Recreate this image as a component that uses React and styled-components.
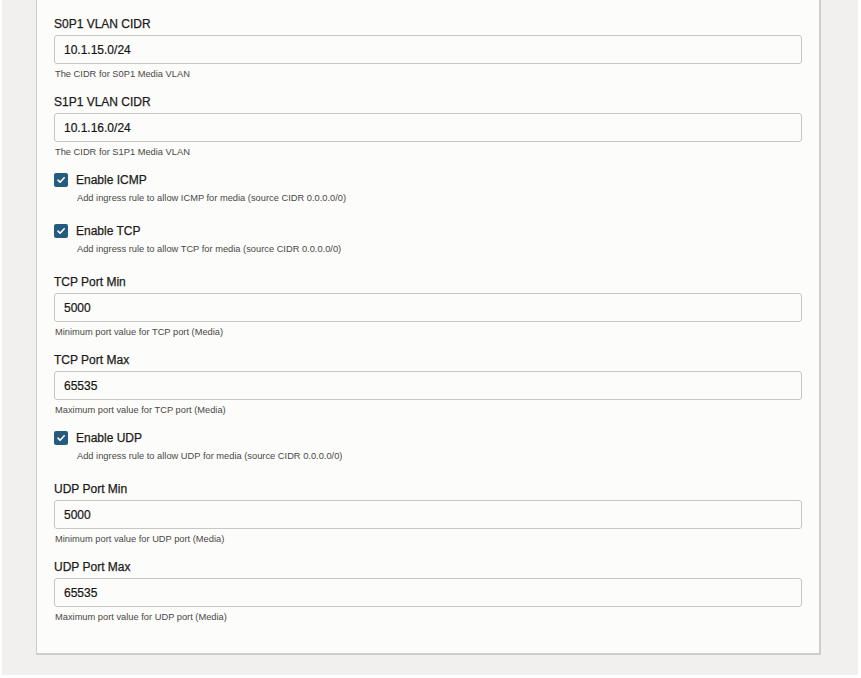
import React from "react";
import styled, { createGlobalStyle } from "styled-components";

const GlobalStyle = createGlobalStyle`
  html, body {
    margin: 0;
    padding: 0;
    background: #ffffff;
  }
  body {
    font-family: "Liberation Sans", Arial, sans-serif;
  }
`;

const Page = styled.div`
  margin: 0 3px 0 2px;
  padding: 0 37px 20px 34px;
  background: #f1f0ee;
`;

const Panel = styled.div`
  background: #fcfcfb;
  border: 1px solid #cfcdca;
  border-top: none;
  border-width: 0 2px 2px 1px;
  padding: 16px 17px 16px 17px;
`;

const Field = styled.div`
  margin-bottom: 14px;
`;

const Label = styled.div`
  font-size: 12px;
  line-height: 16px;
  color: #1c1b19;
  margin-bottom: 3px;
  -webkit-text-stroke: 0.25px #1c1b19;
`;

const Input = styled.div`
  height: 29px;
  box-sizing: border-box;
  border: 1px solid #c9c7c3;
  border-radius: 3px;
  padding: 0 9px;
  display: flex;
  align-items: center;
  font-size: 12px;
  color: #161513;
  background: #fcfcfb;
  -webkit-text-stroke: 0.2px #161513;
`;

const Help = styled.div`
  margin-top: 4px;
  font-size: 9.3px;
  line-height: 12px;
  color: #4a4845;
  padding-left: ${(p) => (p.indent ? "23px" : "1px")};
`;

const CheckGroup = styled.div`
  margin-bottom: 19px;
`;

const CheckRow = styled.label`
  display: flex;
  align-items: center;
  gap: 8px;
  height: 16px;
  font-size: 12px;
  color: #1c1b19;
  -webkit-text-stroke: 0.25px #1c1b19;
`;

const Box = styled.span`
  width: 14px;
  height: 14px;
  border-radius: 2px;
  background: #245b7e;
  display: flex;
  align-items: center;
  justify-content: center;
`;

const Tick = () => (
  <svg width="10" height="10" viewBox="0 0 10 10">
    <path
      d="M2 5.2 L4.1 7.2 L8.2 2.8"
      fill="none"
      stroke="#ffffff"
      strokeWidth="1.6"
      strokeLinecap="round"
      strokeLinejoin="round"
    />
  </svg>
);

function TextField({ label, value, help }) {
  return (
    <Field>
      <Label>{label}</Label>
      <Input>{value}</Input>
      <Help>{help}</Help>
    </Field>
  );
}

function CheckField({ label, help }) {
  return (
    <CheckGroup>
      <CheckRow>
        <Box>
          <Tick />
        </Box>
        {label}
      </CheckRow>
      <Help indent>{help}</Help>
    </CheckGroup>
  );
}

export default function App() {
  return (
    <>
      <GlobalStyle />
      <Page>
        <Panel>
          <TextField
            label="S0P1 VLAN CIDR"
            value="10.1.15.0/24"
            help="The CIDR for S0P1 Media VLAN"
          />
          <TextField
            label="S1P1 VLAN CIDR"
            value="10.1.16.0/24"
            help="The CIDR for S1P1 Media VLAN"
          />
          <CheckField
            label="Enable ICMP"
            help="Add ingress rule to allow ICMP for media (source CIDR 0.0.0.0/0)"
          />
          <CheckField
            label="Enable TCP"
            help="Add ingress rule to allow TCP for media (source CIDR 0.0.0.0/0)"
          />
          <TextField
            label="TCP Port Min"
            value="5000"
            help="Minimum port value for TCP port (Media)"
          />
          <TextField
            label="TCP Port Max"
            value="65535"
            help="Maximum port value for TCP port (Media)"
          />
          <CheckField
            label="Enable UDP"
            help="Add ingress rule to allow UDP for media (source CIDR 0.0.0.0/0)"
          />
          <TextField
            label="UDP Port Min"
            value="5000"
            help="Minimum port value for UDP port (Media)"
          />
          <TextField
            label="UDP Port Max"
            value="65535"
            help="Maximum port value for UDP port (Media)"
          />
        </Panel>
      </Page>
    </>
  );
}
